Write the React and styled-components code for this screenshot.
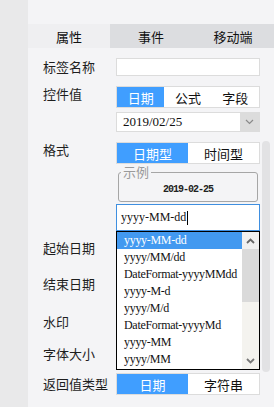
import React from 'react';
import styled, { createGlobalStyle } from 'styled-components';

const GlobalStyle = createGlobalStyle`
  html, body {
    margin: 0;
    padding: 0;
    background: #f4f4f6;
  }
  body {
    font-family: "Noto Sans CJK SC", "Noto Sans", sans-serif;
    color: #1e1e1e;
  }
`;

const SERIF = '"Liberation Serif", "DejaVu Serif", serif';
const MONO = '"Liberation Mono", "DejaVu Sans Mono", monospace';
const BLUE = '#409eff';

const formats = [
  'yyyy-MM-dd',
  'yyyy/MM/dd',
  'DateFormat-yyyyMMdd',
  'yyyy-M-d',
  'yyyy/M/d',
  'DateFormat-yyyyMd',
  'yyyy-MM',
  'yyyy/MM',
];

const Chevron = ({ up }) => (
  <svg width="9" height="6" viewBox="0 0 9 6">
    <polyline
      points={up ? '1,5 4.5,1.5 8,5' : '1,1 4.5,4.5 8,1'}
      fill="none"
      stroke={up ? '#666' : '#8a8a8a'}
      strokeWidth={up ? 1.8 : 1.2}
    />
  </svg>
);

const App = () => {
  return (
    <>
      <GlobalStyle />
      <Page>
        <LeftStrip />
        <Panel>
          <TopSpace />
          <Tabs>
            <Tab $active>属性</Tab>
            <Tab>事件</Tab>
            <Tab>移动端</Tab>
          </Tabs>

          <Form>
            <Row $mt={10} $center>
              <Label>标签名称</Label>
              <Control>
                <TextInput />
              </Control>
            </Row>

            <Row $mt={10}>
              <Label>控件值</Label>
              <Control>
                <Segmented>
                  <Seg $active>日期</Seg>
                  <Seg>公式</Seg>
                  <Seg>字段</Seg>
                </Segmented>
                <Combo>
                  <ComboText>2019/02/25</ComboText>
                  <ComboBtn>
                    <Chevron />
                  </ComboBtn>
                </Combo>
              </Control>
            </Row>

            <Row $mt={10}>
              <Label>格式</Label>
              <Control>
                <Segmented>
                  <Seg $active>日期型</Seg>
                  <Seg>时间型</Seg>
                </Segmented>
                <Sample>
                  <Legend>示例</Legend>
                  <SampleText>2019-02-25</SampleText>
                </Sample>
                <FormatBox>
                  <FormatInput>
                    yyyy-MM-dd<Caret />
                  </FormatInput>
                  <DropList>
                    {formats.map((f, i) => (
                      <DropItem key={f} $selected={i === 0}>
                        {f}
                      </DropItem>
                    ))}
                    <ListScroll>
                      <ScrollArrow $top>
                        <Chevron up />
                      </ScrollArrow>
                      <ScrollThumb />
                      <ScrollTrack />
                      <ScrollArrow>
                        <svg width="9" height="6" viewBox="0 0 9 6">
                          <polyline points="1,1 4.5,4.5 8,1" fill="none" stroke="#777" strokeWidth="1.8" />
                        </svg>
                      </ScrollArrow>
                    </ListScroll>
                  </DropList>
                </FormatBox>
              </Control>
            </Row>

            <Row $mt={7} $h={20} $center>
              <Label>起始日期</Label>
            </Row>
            <Row $mt={16} $h={20} $center>
              <Label>结束日期</Label>
            </Row>
            <Row $mt={18} $h={20} $center>
              <Label>水印</Label>
            </Row>
            <Row $mt={12} $h={20} $center>
              <Label>字体大小</Label>
            </Row>
            <Row $mt={9} $center>
              <Label>返回值类型</Label>
              <Control>
                <Segmented>
                  <Seg $active>日期</Seg>
                  <Seg>字符串</Seg>
                </Segmented>
              </Control>
            </Row>
          </Form>

          <PanelScroll />
        </Panel>
      </Page>
    </>
  );
};

const Page = styled.div`
  display: flex;
  width: 274px;
  height: 407px;
  overflow: hidden;
`;

const LeftStrip = styled.div`
  width: 28px;
  flex-shrink: 0;
  background: #e9e9ea;
`;

const Panel = styled.div`
  position: relative;
  flex: 1;
  background: #f4f4f6;
`;

const TopSpace = styled.div`
  height: 24px;
`;

const Tabs = styled.div`
  display: grid;
  grid-template-columns: repeat(3, 1fr);
  height: 24px;
  background: #dcdde0;
`;

const Tab = styled.div`
  display: flex;
  align-items: center;
  justify-content: center;
  font-size: 13px;
  color: #111;
  background: ${(p) => (p.$active ? '#efeff1' : 'transparent')};
`;

const Form = styled.div`
  display: flex;
  flex-direction: column;
  padding: 0 14px 0 15px;
`;

const Row = styled.div`
  display: flex;
  align-items: ${(p) => (p.$center ? 'center' : 'flex-start')};
  margin-top: ${(p) => p.$mt}px;
  min-height: ${(p) => (p.$h ? `${p.$h}px` : 'auto')};
`;

const Label = styled.div`
  width: 73px;
  flex-shrink: 0;
  font-size: 13px;
  line-height: 16px;
  color: #1e1e1e;
`;

const Control = styled.div`
  flex: 1;
  display: flex;
  flex-direction: column;
  gap: 4px;
`;

const TextInput = styled.div`
  box-sizing: border-box;
  height: 18px;
  background: #fff;
  border: 1px solid #dcdcdc;
`;

const Segmented = styled.div`
  display: flex;
  box-sizing: border-box;
  height: 22px;
  border: 1px solid #dcdcdc;
  background: #fff;
`;

const Seg = styled.div`
  flex: 1;
  display: flex;
  align-items: center;
  justify-content: center;
  font-size: 13px;
  color: ${(p) => (p.$active ? '#fff' : '#111')};
  background: ${(p) => (p.$active ? BLUE : '#fff')};
`;

const Combo = styled.div`
  display: flex;
  box-sizing: border-box;
  height: 20px;
  border: 1px solid #dcdcdc;
  background: #fff;
`;

const ComboText = styled.div`
  flex: 1;
  padding-left: 6px;
  font-family: ${SERIF};
  font-size: 13px;
  line-height: 18px;
  color: #111;
`;

const ComboBtn = styled.div`
  width: 19px;
  display: flex;
  align-items: center;
  justify-content: center;
  background: #dcdcdc;
`;

const Sample = styled.fieldset`
  margin: -2px 2px 0;
  padding: 0;
  min-inline-size: 0;
  border: 1px solid #a6a6a6;
  border-radius: 3px;
`;

const Legend = styled.legend`
  margin-left: 2px;
  padding: 0 2px;
  font-size: 13px;
  line-height: 12px;
  color: #9a9a9a;
`;

const SampleText = styled.div`
  height: 23px;
  line-height: 23px;
  text-align: center;
  font-family: ${MONO};
  font-size: 10px;
  font-weight: bold;
  letter-spacing: -1px;
  color: #222;
`;

const FormatBox = styled.div`
  position: relative;
  margin-top: -2px;
`;

const FormatInput = styled.div`
  box-sizing: border-box;
  height: 27px;
  padding-left: 4px;
  display: flex;
  align-items: center;
  background: #fff;
  border: 1px solid #3f8fe0;
  font-family: ${SERIF};
  font-size: 12px;
  color: #111;
`;

const Caret = styled.span`
  display: inline-block;
  width: 1px;
  height: 14px;
  margin-left: 1px;
  background: #000;
`;

const DropList = styled.div`
  position: absolute;
  z-index: 2;
  top: 100%;
  left: 0;
  right: 0;
  box-sizing: border-box;
  height: 139px;
  padding-right: 17px;
  background: #fff;
  border: 1px solid #000;
  overflow: hidden;
`;

const DropItem = styled.div`
  height: 17px;
  line-height: 17px;
  padding-left: 7px;
  font-family: ${SERIF};
  font-size: 12px;
  letter-spacing: -0.3px;
  white-space: nowrap;
  color: ${(p) => (p.$selected ? '#fff' : '#111')};
  background: ${(p) => (p.$selected ? '#4299f0' : 'transparent')};
`;

const ListScroll = styled.div`
  position: absolute;
  top: 0;
  right: 0;
  bottom: 0;
  width: 17px;
  display: flex;
  flex-direction: column;
  background: #f4f3ef;
`;

const ScrollArrow = styled.div`
  height: 17px;
  display: flex;
  align-items: center;
  justify-content: center;
  background: ${(p) => (p.$top ? '#f0f0f0' : '#f4f3ef')};
`;

const ScrollThumb = styled.div`
  height: 53px;
  background: #dadada;
`;

const ScrollTrack = styled.div`
  flex: 1;
`;

const PanelScroll = styled.div`
  position: absolute;
  left: 234px;
  top: 141px;
  width: 8px;
  height: 231px;
  border-radius: 4px;
  background: #e2e2e4;
`;

export default App;
